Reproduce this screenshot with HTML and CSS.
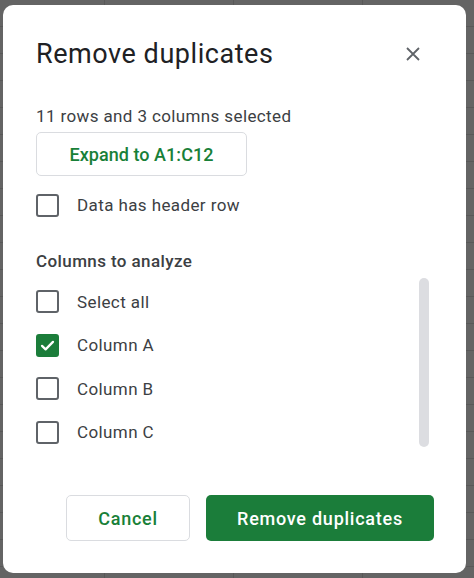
FILE: index.html
```html
<!DOCTYPE html>
<html>
<head>
<meta charset="utf-8">
<link rel="stylesheet" href="styles.css">
</head>
<body>
<div class="backdrop">
  <div class="dialog">
    <div class="header">
      <h1 class="title">Remove duplicates</h1>
      <button class="close" aria-label="Close">
        <svg width="14" height="14" viewBox="0 0 14 14"><path d="M1 1L13 13M13 1L1 13" stroke="#5f6368" stroke-width="1.8" fill="none"/></svg>
      </button>
    </div>
    <div class="summary">11 rows and 3 columns selected</div>
    <button class="btn outline expand">Expand to A1:C12</button>
    <label class="check-row header-row"><span class="box"></span><span class="label">Data has header row</span></label>
    <div class="section-title">Columns to analyze</div>
    <div class="list-wrap">
      <div class="list">
        <label class="check-row item"><span class="box"></span><span class="label">Select all</span></label>
        <label class="check-row item"><span class="box checked"><svg width="17" height="17" viewBox="0 0 18 18"><path d="M3.2 9.4L7 13.1L14.8 5.2" stroke="#fff" stroke-width="2.4" fill="none" stroke-linecap="round" stroke-linejoin="round"/></svg></span><span class="label">Column A</span></label>
        <label class="check-row item"><span class="box"></span><span class="label">Column B</span></label>
        <label class="check-row item"><span class="box"></span><span class="label">Column C</span></label>
      </div>
      <div class="scrollbar"></div>
    </div>
    <div class="footer">
      <button class="btn outline cancel">Cancel</button>
      <button class="btn primary">Remove duplicates</button>
    </div>
  </div>
</div>
</body>
</html>
```
FILE: styles.css
```css
* { box-sizing: border-box; }
html, body { margin: 0; padding: 0; }
body {
  width: 474px;
  height: 578px;
  overflow: hidden;
  font-family: Roboto, "Noto Sans", Arial, sans-serif;
  background-color: #646464;
  background-image:
    repeating-linear-gradient(to right, transparent 0, transparent 104px, #585858 104px, #585858 105px, transparent 105px, transparent 129px),
    repeating-linear-gradient(to bottom, transparent 0, transparent 26px, #585858 26px, #585858 27px);
}
.backdrop {
  padding: 5px 8px 5px 3px;
}
.dialog {
  width: 463px;
  height: 568px;
  background: #fff;
  border-radius: 10px;
  padding: 33px 32px 0 33px;
  display: flex;
  flex-direction: column;
}
.header {
  height: 32px;
  display: flex;
  align-items: center;
  justify-content: space-between;
}
.title {
  margin: 0;
  font-size: 27px;
  font-weight: 400;
  color: #202124;
  line-height: 32px;
  letter-spacing: 0.55px;
}
.close {
  border: 0;
  background: none;
  padding: 0;
  width: 14px;
  height: 14px;
  margin-right: 14px;
  display: flex;
}
.summary {
  margin-top: 35px;
  font-size: 17px;
  line-height: 22px;
  color: #3c4043;
  letter-spacing: 0.38px;
}
.btn {
  font-family: inherit;
  border-radius: 5px;
  font-size: 18px;
  font-weight: 500;
  letter-spacing: 0.75px;
  cursor: pointer;
}
.outline {
  background: #fff;
  border: 1px solid #dadce0;
  color: #188038;
}
.expand {
  margin-top: 5px;
  width: 211px;
  height: 44px;
  align-self: flex-start;
  letter-spacing: 0.05px;
}
.check-row {
  display: flex;
  align-items: center;
}
.box {
  width: 23px;
  height: 23px;
  border: 2px solid #5f6368;
  border-radius: 3px;
  flex: none;
  display: flex;
  align-items: center;
  justify-content: center;
}
.box.checked {
  background: #1b7d3a;
  border-color: #1b7d3a;
}
.label {
  margin-left: 18px;
  font-size: 17px;
  color: #3c4043;
  letter-spacing: 0.4px;
}
.header-row {
  margin-top: 17px;
  height: 24px;
}
.section-title {
  margin-top: 33px;
  font-size: 17px;
  line-height: 22px;
  font-weight: 500;
  color: #3c4043;
  letter-spacing: 0.4px;
}
.list-wrap {
  margin-top: 6px;
  display: flex;
  justify-content: space-between;
}
.list {
  padding-top: 2px;
  display: flex;
  flex-direction: column;
}
.item {
  height: 43.5px;
}
.scrollbar {
  width: 10px;
  height: 169px;
  background: #dcdde1;
  border-radius: 5px;
  margin-right: 5px;
}
.footer {
  margin-top: 41px;
  display: flex;
  justify-content: flex-end;
  gap: 16px;
}
.cancel {
  width: 124px;
  height: 46px;
}
.primary {
  width: 228px;
  height: 46px;
  background: #1b7d3a;
  border: 0;
  color: #fff;
}
```
